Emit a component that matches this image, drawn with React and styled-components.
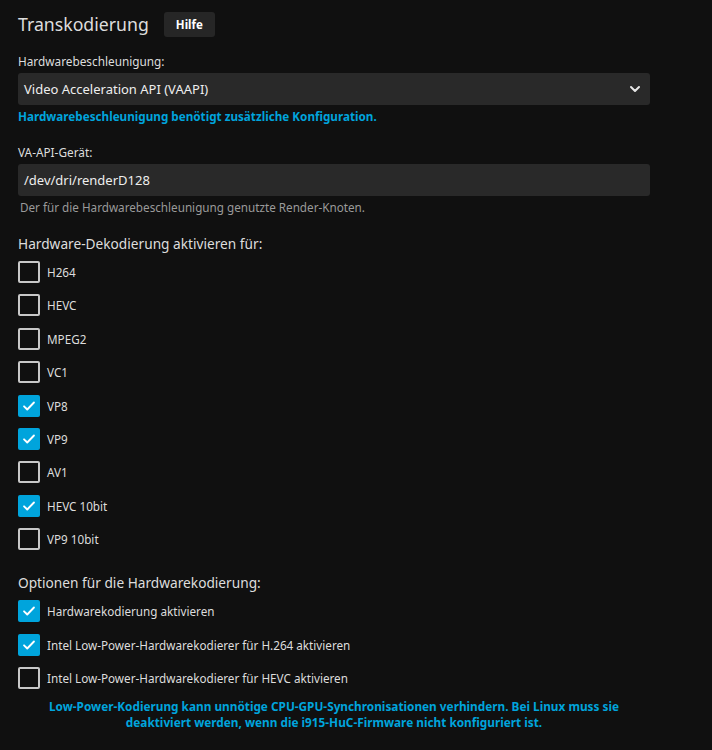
import React from "react";
import styled, { createGlobalStyle } from "styled-components";

const GlobalStyle = createGlobalStyle`
  html, body {
    margin: 0;
    padding: 0;
    background: #101010;
  }
  body {
    font-family: "Noto Sans", "Open Sans", sans-serif;
    color: #dddddd;
  }
`;

const Page = styled.div`
  width: 632px;
  padding: 8px 0 0 18px;
  min-height: 750px;
`;

const Header = styled.header`
  display: flex;
  align-items: center;
  gap: 15px;
  height: 32px;
  margin-bottom: 13px;
`;

const Title = styled.h2`
  margin: 0;
  font-size: 17.7px;
  font-weight: 400;
  color: #dddddd;
`;

const HelpButton = styled.button`
  background: #262626;
  color: #ffffff;
  border: 0;
  border-radius: 3px;
  font-family: inherit;
  font-size: 11.5px;
  font-weight: 700;
  width: 51px;
  height: 25px;
  padding: 0;
`;

const Field = styled.div`
  margin-bottom: ${(p) => p.$gap || 0}px;
`;

const Label = styled.label`
  display: block;
  font-size: 11.8px;
  line-height: 17px;
  margin-bottom: 3px;
  color: #dddddd;
`;

const Box = styled.div`
  display: flex;
  align-items: center;
  justify-content: space-between;
  height: 32px;
  padding: 0 9px 0 6px;
  background: #292929;
  border-radius: 3px;
  font-size: 13px;
  color: #eeeeee;
`;

const Hint = styled.div`
  font-size: 11.7px;
  font-weight: ${(p) => (p.$accent ? 700 : 400)};
  color: ${(p) => (p.$accent ? "#00a4dc" : "#9a9a9a")};
  line-height: 16px;
  margin-top: 3px;
  padding-left: ${(p) => (p.$accent ? 0 : 2)}px;
`;

const SectionTitle = styled.h3`
  margin: 0 0 7px;
  font-size: 13.7px;
  font-weight: 400;
  line-height: 20px;
  color: #dddddd;
`;

const List = styled.div`
  display: flex;
  flex-direction: column;
  gap: 11.4px;
  margin-bottom: ${(p) => p.$gap || 0}px;
`;

const Row = styled.label`
  display: flex;
  align-items: center;
  gap: 7px;
  height: 22px;
  font-size: 11.7px;
  color: #dddddd;
`;

const Check = styled.span`
  width: 22px;
  height: 22px;
  box-sizing: border-box;
  border-radius: 2px;
  border: ${(p) => (p.$on ? "none" : "2px solid #c8c8c8")};
  background: ${(p) => (p.$on ? "#00a4dc" : "transparent")};
  display: flex;
  align-items: center;
  justify-content: center;
`;

const Note = styled.p`
  margin: 9px 0 0;
  text-align: center;
  font-size: 11.8px;
  font-weight: 700;
  line-height: 16px;
  color: #00a4dc;
`;

const Tick = () => (
  <svg width="14" height="14" viewBox="0 0 24 24" fill="none">
    <path
      d="M3.5 12.5l5.5 5.5L20.5 6"
      stroke="#ffffff"
      strokeWidth="3.2"
      strokeLinecap="round"
      strokeLinejoin="round"
    />
  </svg>
);

const Chevron = () => (
  <svg width="12" height="12" viewBox="0 0 24 24" fill="none">
    <path
      d="M4 8l8 8 8-8"
      stroke="#e6e6e6"
      strokeWidth="4"
      strokeLinecap="round"
      strokeLinejoin="round"
    />
  </svg>
);

const decoders = [
  ["H264", false],
  ["HEVC", false],
  ["MPEG2", false],
  ["VC1", false],
  ["VP8", true],
  ["VP9", true],
  ["AV1", false],
  ["HEVC 10bit", true],
  ["VP9 10bit", false],
];

const encoders = [
  ["Hardwarekodierung aktivieren", true],
  ["Intel Low-Power-Hardwarekodierer für H.264 aktivieren", true],
  ["Intel Low-Power-Hardwarekodierer für HEVC aktivieren", false],
];

function CheckRow({ label, on }) {
  return (
    <Row>
      <Check $on={on}>{on && <Tick />}</Check>
      {label}
    </Row>
  );
}

export default function App() {
  return (
    <>
      <GlobalStyle />
      <Page>
        <Header>
          <Title>Transkodierung</Title>
          <HelpButton>Hilfe</HelpButton>
        </Header>

        <Field $gap={20}>
          <Label>Hardwarebeschleunigung:</Label>
          <Box>
            Video Acceleration API (VAAPI)
            <Chevron />
          </Box>
          <Hint $accent>Hardwarebeschleunigung benötigt zusätzliche Konfiguration.</Hint>
        </Field>

        <Field $gap={19}>
          <Label>VA-API-Gerät:</Label>
          <Box>/dev/dri/renderD128</Box>
          <Hint>Der für die Hardwarebeschleunigung genutzte Render-Knoten.</Hint>
        </Field>

        <SectionTitle>Hardware-Dekodierung aktivieren für:</SectionTitle>
        <List $gap={23}>
          {decoders.map(([label, on]) => (
            <CheckRow key={label} label={label} on={on} />
          ))}
        </List>

        <SectionTitle>Optionen für die Hardwarekodierung:</SectionTitle>
        <List>
          {encoders.map(([label, on]) => (
            <CheckRow key={label} label={label} on={on} />
          ))}
        </List>

        <Note>
          Low-Power-Kodierung kann unnötige CPU-GPU-Synchronisationen verhindern. Bei Linux muss sie
          <br />
          deaktiviert werden, wenn die i915-HuC-Firmware nicht konfiguriert ist.
        </Note>
      </Page>
    </>
  );
}
